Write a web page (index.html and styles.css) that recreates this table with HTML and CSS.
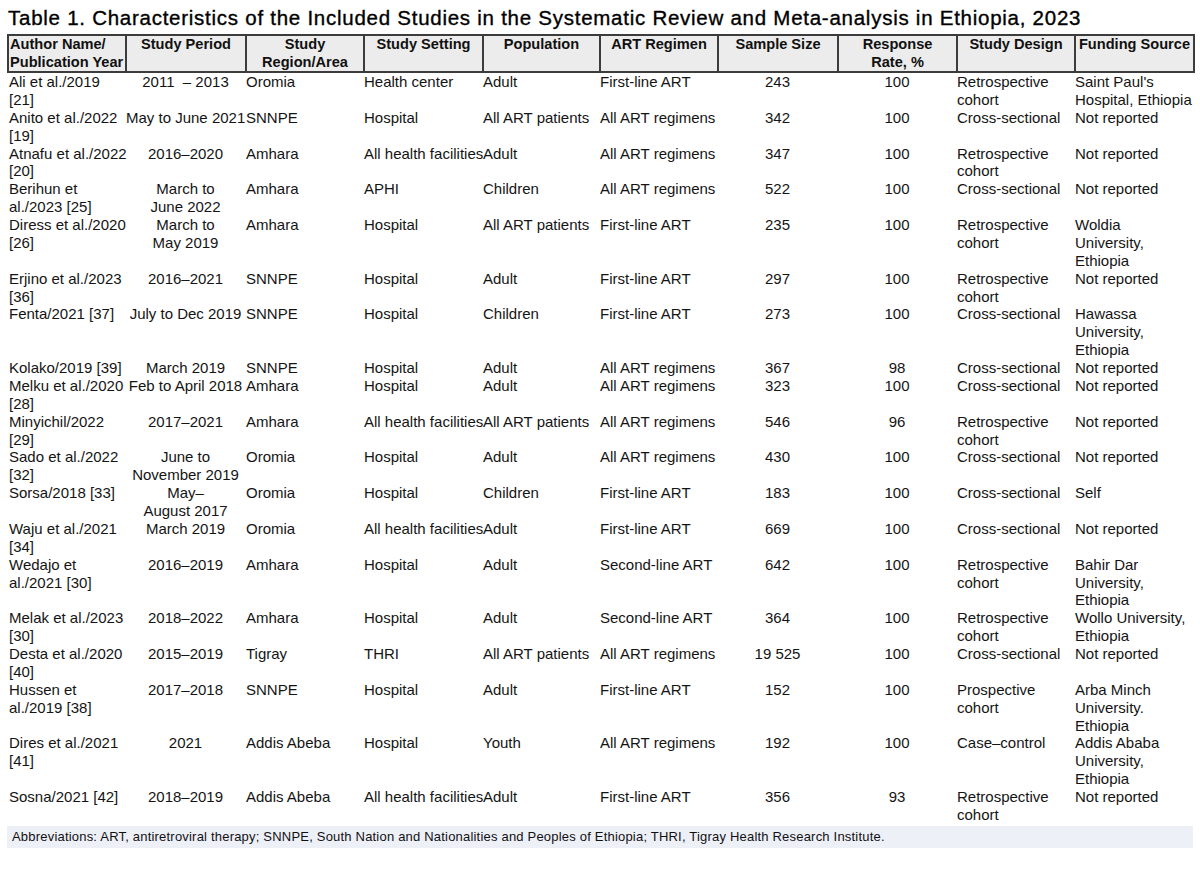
FILE: index.html
```html
<!DOCTYPE html>
<html>
<head>
<meta charset="utf-8">
<link rel="stylesheet" href="styles.css">
</head>
<body>
<div class="page">
<h1 class="title">Table 1. Characteristics of the Included Studies in the Systematic Review and Meta-analysis in Ethiopia, 2023</h1>
<table class="studies">
<colgroup>
<col class="c1"><col class="c2"><col class="c3"><col class="c4"><col class="c5"><col class="c6"><col class="c7"><col class="c8"><col class="c9"><col class="c10">
</colgroup>
<thead>
<tr>
<th class="left">Author Name/<br>Publication Year</th>
<th>Study Period</th>
<th>Study<br>Region/Area</th>
<th>Study Setting</th>
<th>Population</th>
<th>ART Regimen</th>
<th>Sample Size</th>
<th>Response<br>Rate, %</th>
<th>Study Design</th>
<th>Funding Source</th>
</tr>
</thead>
<tbody>
<tr><td>Ali et al./2019<br>[21]</td><td class="ctr">2011 &nbsp;– 2013</td><td>Oromia</td><td>Health center</td><td>Adult</td><td>First-line ART</td><td class="ctr">243</td><td class="ctr">100</td><td>Retrospective<br>cohort</td><td>Saint Paul's<br>Hospital, Ethiopia</td></tr>
<tr><td>Anito et al./2022<br>[19]</td><td class="ctr">May to June 2021</td><td>SNNPE</td><td>Hospital</td><td>All ART patients</td><td>All ART regimens</td><td class="ctr">342</td><td class="ctr">100</td><td>Cross-sectional</td><td>Not reported</td></tr>
<tr><td>Atnafu et al./2022<br>[20]</td><td class="ctr">2016–2020</td><td>Amhara</td><td>All health facilities</td><td>Adult</td><td>All ART regimens</td><td class="ctr">347</td><td class="ctr">100</td><td>Retrospective<br>cohort</td><td>Not reported</td></tr>
<tr><td>Berihun et<br>al./2023 [25]</td><td class="ctr">March to<br>June 2022</td><td>Amhara</td><td>APHI</td><td>Children</td><td>All ART regimens</td><td class="ctr">522</td><td class="ctr">100</td><td>Cross-sectional</td><td>Not reported</td></tr>
<tr><td>Diress et al./2020<br>[26]</td><td class="ctr">March to<br>May 2019</td><td>Amhara</td><td>Hospital</td><td>All ART patients</td><td>First-line ART</td><td class="ctr">235</td><td class="ctr">100</td><td>Retrospective<br>cohort</td><td>Woldia<br>University,<br>Ethiopia</td></tr>
<tr><td>Erjino et al./2023<br>[36]</td><td class="ctr">2016–2021</td><td>SNNPE</td><td>Hospital</td><td>Adult</td><td>First-line ART</td><td class="ctr">297</td><td class="ctr">100</td><td>Retrospective<br>cohort</td><td>Not reported</td></tr>
<tr><td>Fenta/2021 [37]</td><td class="ctr">July to Dec 2019</td><td>SNNPE</td><td>Hospital</td><td>Children</td><td>First-line ART</td><td class="ctr">273</td><td class="ctr">100</td><td>Cross-sectional</td><td>Hawassa<br>University,<br>Ethiopia</td></tr>
<tr><td>Kolako/2019 [39]</td><td class="ctr">March 2019</td><td>SNNPE</td><td>Hospital</td><td>Adult</td><td>All ART regimens</td><td class="ctr">367</td><td class="ctr">98</td><td>Cross-sectional</td><td>Not reported</td></tr>
<tr><td>Melku et al./2020<br>[28]</td><td class="ctr">Feb to April 2018</td><td>Amhara</td><td>Hospital</td><td>Adult</td><td>All ART regimens</td><td class="ctr">323</td><td class="ctr">100</td><td>Cross-sectional</td><td>Not reported</td></tr>
<tr><td>Minyichil/2022<br>[29]</td><td class="ctr">2017–2021</td><td>Amhara</td><td>All health facilities</td><td>All ART patients</td><td>All ART regimens</td><td class="ctr">546</td><td class="ctr">96</td><td>Retrospective<br>cohort</td><td>Not reported</td></tr>
<tr><td>Sado et al./2022<br>[32]</td><td class="ctr">June to<br>November 2019</td><td>Oromia</td><td>Hospital</td><td>Adult</td><td>All ART regimens</td><td class="ctr">430</td><td class="ctr">100</td><td>Cross-sectional</td><td>Not reported</td></tr>
<tr><td>Sorsa/2018 [33]</td><td class="ctr">May–<br>August 2017</td><td>Oromia</td><td>Hospital</td><td>Children</td><td>First-line ART</td><td class="ctr">183</td><td class="ctr">100</td><td>Cross-sectional</td><td>Self</td></tr>
<tr><td>Waju et al./2021<br>[34]</td><td class="ctr">March 2019</td><td>Oromia</td><td>All health facilities</td><td>Adult</td><td>First-line ART</td><td class="ctr">669</td><td class="ctr">100</td><td>Cross-sectional</td><td>Not reported</td></tr>
<tr><td>Wedajo et<br>al./2021 [30]</td><td class="ctr">2016–2019</td><td>Amhara</td><td>Hospital</td><td>Adult</td><td>Second-line ART</td><td class="ctr">642</td><td class="ctr">100</td><td>Retrospective<br>cohort</td><td>Bahir Dar<br>University,<br>Ethiopia</td></tr>
<tr><td>Melak et al./2023<br>[30]</td><td class="ctr">2018–2022</td><td>Amhara</td><td>Hospital</td><td>Adult</td><td>Second-line ART</td><td class="ctr">364</td><td class="ctr">100</td><td>Retrospective<br>cohort</td><td>Wollo University,<br>Ethiopia</td></tr>
<tr><td>Desta et al./2020<br>[40]</td><td class="ctr">2015–2019</td><td>Tigray</td><td>THRI</td><td>All ART patients</td><td>All ART regimens</td><td class="ctr">19 525</td><td class="ctr">100</td><td>Cross-sectional</td><td>Not reported</td></tr>
<tr><td>Hussen et<br>al./2019 [38]</td><td class="ctr">2017–2018</td><td>SNNPE</td><td>Hospital</td><td>Adult</td><td>First-line ART</td><td class="ctr">152</td><td class="ctr">100</td><td>Prospective<br>cohort</td><td>Arba Minch<br>University.<br>Ethiopia</td></tr>
<tr><td>Dires et al./2021<br>[41]</td><td class="ctr">2021</td><td>Addis Abeba</td><td>Hospital</td><td>Youth</td><td>All ART regimens</td><td class="ctr">192</td><td class="ctr">100</td><td>Case–control</td><td>Addis Ababa<br>University,<br>Ethiopia</td></tr>
<tr><td>Sosna/2021 [42]</td><td class="ctr">2018–2019</td><td>Addis Abeba</td><td>All health facilities</td><td>Adult</td><td>First-line ART</td><td class="ctr">356</td><td class="ctr">93</td><td>Retrospective<br>cohort</td><td>Not reported</td></tr>
</tbody>
</table>
<p class="note">Abbreviations: ART, antiretroviral therapy; SNNPE, South Nation and Nationalities and Peoples of Ethiopia; THRI, Tigray Health Research Institute.</p>
</div>
</body>
</html>
```
FILE: styles.css
```css
html, body {
  margin: 0;
  padding: 0;
  background: #ffffff;
}
.page {
  padding: 7px 7px 0 7px;
  font-family: "Liberation Sans", Arial, sans-serif;
  color: #141414;
}
.title {
  margin: 0 0 0 1px;
  font-size: 20.5px;
  letter-spacing: 0.74px;
  font-weight: normal;
  line-height: 22px;
  color: #000;
  -webkit-text-stroke: 0.35px #000;
  white-space: nowrap;
}
.studies {
  margin-top: 5px;
  border-collapse: collapse;
  table-layout: fixed;
  width: 1186px;
  font-size: 15px;
  line-height: 17.875px;
}
.c1 { width: 118px; }
.c2 { width: 120px; }
.c3 { width: 118px; }
.c4 { width: 119px; }
.c5 { width: 117px; }
.c6 { width: 118px; }
.c7 { width: 120px; }
.c8 { width: 119px; }
.c9 { width: 118px; }
.c10 { width: 119px; }
.studies th {
  background: #ececec;
  border: 2px solid #3c3c3c;
  font-size: 14.6px;
  font-weight: bold;
  text-align: center;
  vertical-align: top;
  padding: 0 1px;
  line-height: 17.5px;
  white-space: nowrap;
  color: #111;
}
.studies th.left {
  text-align: left;
}
.studies td {
  vertical-align: top;
  padding: 0 1px 0 0;
  white-space: nowrap;
  text-align: left;
}
.studies td:first-child {
  padding-left: 1px;
}
.studies td.ctr {
  text-align: center;
}
.note {
  margin: 2px 0 0 0;
  width: 1181px;
  padding: 0 0 0 5px;
  height: 22px;
  line-height: 22px;
  font-size: 13px;
  letter-spacing: 0.2px;
  background: #eef0f8;
  color: #111;
}
```
